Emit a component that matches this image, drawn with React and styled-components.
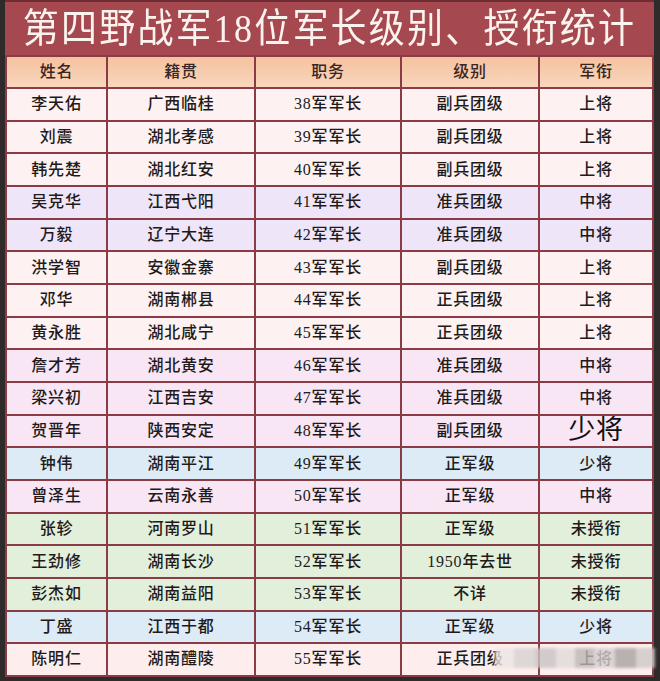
import React from 'react';
import styled, { createGlobalStyle } from 'styled-components';

const GlobalStyle = createGlobalStyle`
  html, body {
    margin: 0;
    padding: 0;
    background: #2f2b2b;
  }
`;

const rowColors = {
  white: '#fdf2f1',
  lilac: '#efe5f8',
  pink: '#f8e6f5',
  blue: '#dcebf6',
  green: '#e2efda',
  rose: '#fdeeed',
};

const rows = [
  ['李天佑', '广西临桂', '38军军长', '副兵团级', '上将', 'white'],
  ['刘震', '湖北孝感', '39军军长', '副兵团级', '上将', 'white'],
  ['韩先楚', '湖北红安', '40军军长', '副兵团级', '上将', 'white'],
  ['吴克华', '江西弋阳', '41军军长', '准兵团级', '中将', 'lilac'],
  ['万毅', '辽宁大连', '42军军长', '准兵团级', '中将', 'lilac'],
  ['洪学智', '安徽金寨', '43军军长', '副兵团级', '上将', 'white'],
  ['邓华', '湖南郴县', '44军军长', '正兵团级', '上将', 'white'],
  ['黄永胜', '湖北咸宁', '45军军长', '正兵团级', '上将', 'white'],
  ['詹才芳', '湖北黄安', '46军军长', '准兵团级', '中将', 'pink'],
  ['梁兴初', '江西吉安', '47军军长', '准兵团级', '中将', 'pink'],
  ['贺晋年', '陕西安定', '48军军长', '副兵团级', '少将', 'pink', true],
  ['钟伟', '湖南平江', '49军军长', '正军级', '少将', 'blue'],
  ['曾泽生', '云南永善', '50军军长', '正军级', '中将', 'pink'],
  ['张轸', '河南罗山', '51军军长', '正军级', '未授衔', 'green'],
  ['王劲修', '湖南长沙', '52军军长', '1950年去世', '未授衔', 'green'],
  ['彭杰如', '湖南益阳', '53军军长', '不详', '未授衔', 'green'],
  ['丁盛', '江西于都', '54军军长', '正军级', '少将', 'blue'],
  ['陈明仁', '湖南醴陵', '55军军长', '正兵团级', '上将', 'rose'],
];

const headers = ['姓名', '籍贯', '职务', '级别', '军衔'];

const Page = styled.div`
  width: 660px;
  height: 681px;
  padding: 0 6px 4px 5px;
  box-sizing: border-box;
  background: #2f2b2b;
  overflow: hidden;
`;

const Sheet = styled.div`
  position: relative;
  display: flex;
  flex-direction: column;
`;

const Title = styled.div`
  flex-shrink: 0;
  height: 53px;
  border-top: 2px solid #6e2c33;
  background: #a6484f;
  color: #fbf3ee;
  display: flex;
  align-items: center;
  justify-content: center;
  font-family: "Liberation Serif", "Noto Sans CJK SC", serif;
  font-size: 36px;
  letter-spacing: 2.2px;
  line-height: 1;

  span {
    display: inline-block;
    transform: scaleY(1.12);
  }
`;

const Table = styled.div`
  flex-shrink: 0;
  display: grid;
  grid-template-columns: 99px 146px 144px 136px 112px;
  grid-template-rows: 30px repeat(18, 30.67px);
  gap: 2px;
  border: 2px solid #8b3b45;
  background: #8b3b45;
`;

const Cell = styled.div`
  display: flex;
  align-items: center;
  justify-content: center;
  min-height: 0;
  overflow: hidden;
  background: ${p => p.$bg};
  font-family: "Liberation Serif", "Noto Sans CJK SC", serif;
  font-size: ${p => (p.$big ? '27px' : '16px')};
  font-weight: ${p => (p.$big ? 400 : 500)};
  color: ${p => (p.$big ? '#111' : '#221a1a')};
  line-height: 1;
  letter-spacing: 0.8px;
  white-space: nowrap;
`;

const HeadCell = styled(Cell)`
  background: linear-gradient(#f4c2a0, #f9d6bd);
  color: #3a2622;
`;

const Watermark = styled.div`
  position: absolute;
  left: 490px;
  bottom: 9px;
  width: 160px;
  height: 20px;
  background: linear-gradient(
    90deg,
    #ece6e4 0 12%,
    #d8d2d2 12% 25%,
    #c9c3c3 25% 38%,
    #e1dada 38% 50%,
    #bdb6b6 50% 62%,
    #d4cdcd 62% 75%,
    #a9a2a2 75% 88%,
    #cfc8c8 88% 100%
  );
  filter: blur(1.5px);
  opacity: 0.8;
`;

const App = () => {
  return (
    <>
      <GlobalStyle />
      <Page>
        <Sheet>
          <Title>
            <span>第四野战军18位军长级别、授衔统计</span>
          </Title>
          <Table>
            {headers.map(h => (
              <HeadCell key={h}>{h}</HeadCell>
            ))}
            {rows.map(row =>
              row.slice(0, 5).map((text, i) => (
                <Cell
                  key={row[0] + i}
                  $bg={rowColors[row[5]]}
                  $big={i === 4 && row[6]}
                >
                  {text}
                </Cell>
              ))
            )}
          </Table>
          <Watermark />
        </Sheet>
      </Page>
    </>
  );
};

export default App;
